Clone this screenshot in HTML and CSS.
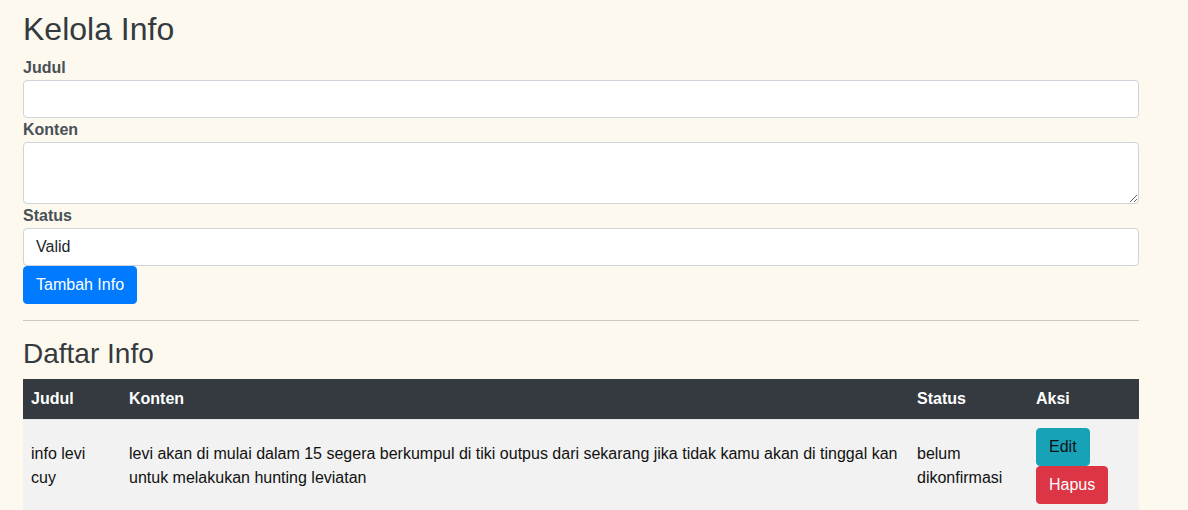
FILE: index.html
```html
<!DOCTYPE html>
<html lang="id">
<head>
<meta charset="utf-8">
<title>Kelola Info</title>
<link rel="stylesheet" href="styles.css">
</head>
<body>
<div class="container">
  <h1 class="title">Kelola Info</h1>
  <form class="form">
    <label class="label" for="judul">Judul</label>
    <input class="control" id="judul" type="text">
    <label class="label" for="konten">Konten</label>
    <textarea class="control area" id="konten" rows="2"></textarea>
    <label class="label" for="status">Status</label>
    <select class="control select" id="status">
      <option>Valid</option>
    </select>
    <div><button type="button" class="btn btn-primary">Tambah Info</button></div>
  </form>
  <hr class="divider">
  <h2 class="subtitle">Daftar Info</h2>
  <table class="table">
    <colgroup>
      <col class="c1">
      <col class="c2">
      <col class="c3">
      <col class="c4">
    </colgroup>
    <thead>
      <tr><th>Judul</th><th>Konten</th><th>Status</th><th>Aksi</th></tr>
    </thead>
    <tbody>
      <tr>
        <td>info levi cuy</td>
        <td>levi akan di mulai dalam 15 segera berkumpul di tiki outpus dari sekarang jika tidak kamu akan di tinggal kan untuk melakukan hunting leviatan</td>
        <td>belum dikonfirmasi</td>
        <td>
          <button type="button" class="btn btn-info">Edit</button><br>
          <button type="button" class="btn btn-danger">Hapus</button>
        </td>
      </tr>
    </tbody>
  </table>
</div>
</body>
</html>
```

FILE: styles.css
```css
* { box-sizing: border-box; }
html, body { margin: 0; padding: 0; }
body {
  background: #fdf9ee;
  font-family: "Liberation Sans", Arial, sans-serif;
  font-size: 16px;
  line-height: 1.5;
  color: #212529;
}
.container {
  width: 1116px;
  margin-left: 23px;
  padding-top: 10px;
}
.title {
  margin: 0 0 8px;
  font-size: 32px;
  font-weight: 400;
  line-height: 1.2;
  color: #343a40;
}
.form { display: flex; flex-direction: column; }
.label {
  display: block;
  font-weight: 700;
  color: #495057;
  line-height: 24px;
}
.control {
  display: block;
  width: 100%;
  height: 38px;
  padding: 6px 12px;
  font-family: inherit;
  font-size: 16px;
  line-height: 1.5;
  color: #212529;
  background: #fff;
  border: 1px solid #ced4da;
  border-radius: 4px;
  margin: 0;
}
.area { height: 62px; resize: vertical; }
.select { appearance: none; -webkit-appearance: none; }
.btn {
  display: inline-block;
  height: 38px;
  padding: 6px 12px;
  font-family: inherit;
  font-size: 16px;
  line-height: 1.5;
  border: 1px solid transparent;
  border-radius: 4px;
  cursor: pointer;
  margin: 0;
  vertical-align: top;
}
.btn-primary { background: #007bff; border-color: #007bff; color: #fff; }
.btn-info { background: #17a2b8; border-color: #17a2b8; color: #111; }
.btn-danger { background: #dc3545; border-color: #dc3545; color: #fff; }
.divider {
  margin: 16px 0;
  border: 0;
  border-top: 1px solid #cdc9c0;
}
.subtitle {
  margin: 0 0 8px;
  font-size: 28px;
  font-weight: 400;
  line-height: 1.2;
  color: #343a40;
}
.table {
  width: 1116px;
  border-collapse: collapse;
  table-layout: fixed;
}
.c1 { width: 98px; }
.c2 { width: 788px; }
.c3 { width: 119px; }
.c4 { width: 111px; }
.table th {
  background: #343a40;
  color: #fff;
  text-align: left;
  font-weight: 700;
  padding: 8px;
  line-height: 24px;
}
.table td {
  background: #f2f2f2;
  color: #111;
  padding: 8px;
  vertical-align: middle;
  line-height: 24px;
  border-top: 1px solid #e4e6e8;
}
```
